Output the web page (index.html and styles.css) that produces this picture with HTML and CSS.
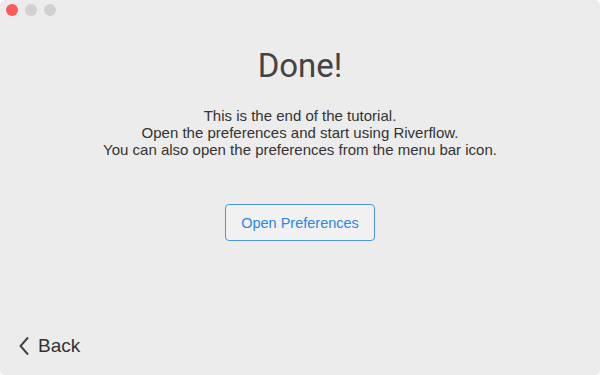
FILE: index.html
```html
<!DOCTYPE html>
<html lang="en">
<head>
  <meta charset="UTF-8">
  <title>Riverflow Tutorial</title>
  <link rel="stylesheet" href="styles.css">
</head>
<body>
<div class="window">
  <div class="titlebar">
    <span class="light close"></span>
    <span class="light"></span>
    <span class="light"></span>
  </div>
  <div class="content">
    <h1>Done!</h1>
    <p class="message">
      This is the end of the tutorial.<br>
      Open the preferences and start using Riverflow.<br>
      You can also open the preferences from the menu bar icon.
    </p>
    <button class="prefs-btn">Open Preferences</button>
  </div>
  <div class="footer">
    <a class="back" href="#">
      <svg width="12" height="20" viewBox="0 0 12 20"><path d="M10 1.5 L2.5 10 L10 18.5" fill="none" stroke="#444" stroke-width="2"/></svg>
      Back
    </a>
  </div>
</div>
</body>
</html>
```

FILE: styles.css
```css
body {
  margin: 0;
  background-color: #fff;
  font-family: "Liberation Sans", Arial, sans-serif;
}
.window {
  width: 600px;
  height: 375px;
  background-color: #ececec;
  border-radius: 5px;
  display: flex;
  flex-direction: column;
  overflow: hidden;
}
.titlebar {
  display: flex;
  gap: 7px;
  padding: 4px 6px;
  height: 12px;
}
.light {
  width: 12px;
  height: 12px;
  border-radius: 50%;
  background-color: #d1d1d1;
}
.light.close { background-color: #f95b58; }
.content {
  flex: 1;
  display: flex;
  flex-direction: column;
  align-items: center;
}
h1 {
  margin: 26px 0 0;
  font-family: Roboto, "Liberation Sans", sans-serif;
  font-size: 33px;
  font-weight: normal;
  color: #444;
  line-height: 40px;
}
.message {
  margin: 21px 0 0;
  text-align: center;
  font-size: 15px;
  line-height: 17px;
  color: #333;
}
.prefs-btn {
  margin-top: 46px;
  width: 150px;
  height: 37px;
  border: 1px solid #4a95e6;
  border-radius: 4px;
  background-color: #f1f1f1;
  color: #2b87e6;
  font-family: inherit;
  font-size: 14.5px;
}
.footer {
  padding: 0 0 15px 18px;
}
.back {
  display: inline-flex;
  align-items: center;
  gap: 8px;
  color: #333;
  text-decoration: none;
  font-size: 19px;
}
```
